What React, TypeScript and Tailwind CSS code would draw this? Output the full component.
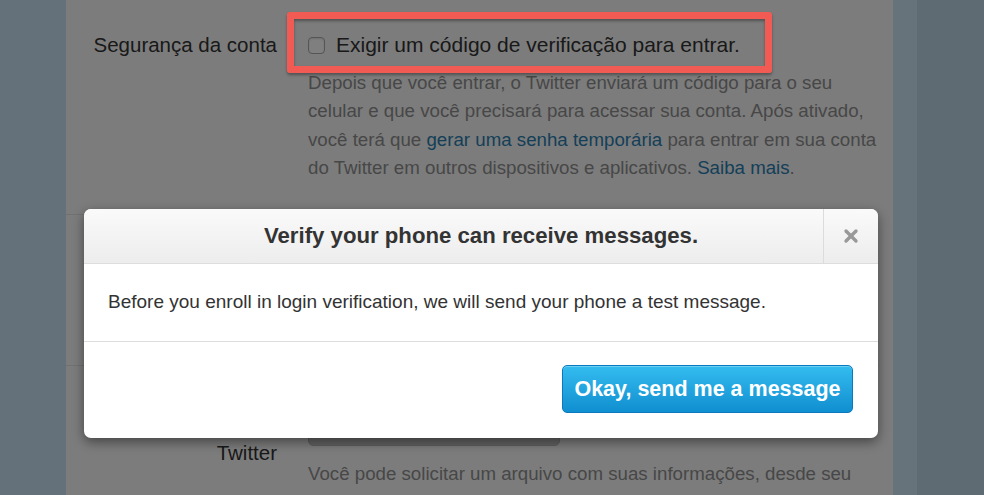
import { X } from "lucide-react";

const font = { fontFamily: '"Liberation Sans", Arial, Helvetica, sans-serif' };

function Row({
  label,
  children,
  className = "",
  labelClass = "",
}: {
  label: React.ReactNode;
  children: React.ReactNode;
  className?: string;
  labelClass?: string;
}) {
  return (
    <div className={`grid grid-cols-[211px_1fr] gap-x-[31px] border-b border-[#e2e2e2] ${className}`}>
      <div className={`text-right text-[20.5px] leading-[28px] text-[#333] ${labelClass}`}>{label}</div>
      <div>{children}</div>
    </div>
  );
}

export default function App() {
  return (
    <div className="relative flex h-[495px] w-[984px] overflow-hidden bg-[#c8e2f4]" style={font}>
      <div className="w-[66px] shrink-0" />

      <main className="w-[827px] shrink-0 bg-[#f9f9f9] pr-[14px]">
        <Row label="Segurança da conta" className="pt-[31px] pb-[31px]">
          <label className="flex h-[28px] items-center gap-[11px]">
            <span className="h-[17px] w-[17px] shrink-0 rounded-[4px] border border-[#aaa] bg-white shadow-[inset_0_1px_2px_rgba(0,0,0,0.12)]" />
            <span className="whitespace-nowrap text-[21px] text-[#333]">Exigir um código de verificação para entrar.</span>
          </label>
          <p className="mt-[10px] whitespace-nowrap text-[18.7px] leading-[28.4px] text-[#8f8f8f]">
            Depois que você entrar, o Twitter enviará um código para o seu
            <br />
            celular e que você precisará para acessar sua conta. Após ativado,
            <br />
            você terá que <a className="text-[#2a7fb0]">gerar uma senha temporária</a> para entrar em sua conta
            <br />
            do Twitter em outros dispositivos e aplicativos. <a className="text-[#2a7fb0]">Saiba mais</a>.
          </p>
        </Row>

        <Row label="Privacidade" className="h-[151px] pt-[30px]">
          <label className="flex h-[28px] items-center gap-[11px]">
            <span className="h-[17px] w-[17px] shrink-0 rounded-[4px] border border-[#aaa] bg-white" />
            <span className="whitespace-nowrap text-[21px] text-[#333]">Proteger meus Tweets</span>
          </label>
          <p className="mt-[10px] whitespace-nowrap text-[18.7px] leading-[28.4px] text-[#8f8f8f]">
            Somente aqueles que você aprovar receberão seus Tweets.
          </p>
        </Row>

        <Row
          label={
            <>
              Seu arquivo do
              <br />
              Twitter
            </>
          }
          labelClass="mt-[13px]"
          className="border-b-0 pt-[32px]"
        >
          <div className="h-[48px] w-[252px] rounded-[5px] border border-[#bbb] bg-gradient-to-b from-[#f4f4f4] to-[#c4c4c4]" />
          <p className="mt-[14px] whitespace-nowrap text-[18.7px] leading-[28.4px] text-[#8f8f8f]">
            Você pode solicitar um arquivo com suas informações, desde seu
            <br />
            primeiro Tweet. Um link será enviado por e-mail quando estiver pronto.
          </p>
        </Row>
      </main>

      <div className="w-[24px] shrink-0 bg-[#cde6f6]" />
      <div className="flex-1 bg-[#bdd7e7]" />

      {/* dim overlay */}
      <div className="absolute inset-0 bg-black/50" />

      {/* annotation */}
      <div className="absolute left-[287px] top-[12px] h-[61px] w-[485px] rounded-[3px] border-[7px] border-[#f25b53] shadow-[0_2px_3px_rgba(0,0,0,0.35),inset_0_2px_3px_rgba(0,0,0,0.35)]" />

      {/* modal */}
      <div className="absolute left-[84px] top-[209px] flex h-[229px] w-[794px] flex-col overflow-hidden rounded-[7px] bg-white shadow-[0_4px_12px_rgba(0,0,0,0.45)]">
        <div className="flex h-[55px] shrink-0 border-b border-[#ddd] bg-gradient-to-b from-[#fafafa] to-[#ededed]">
          <h2 className="flex flex-1 items-center justify-center pl-[55px] text-[22.2px] font-bold text-[#333]">
            Verify your phone can receive messages.
          </h2>
          <button className="flex w-[55px] items-center justify-center border-l border-[#dcdcdc] text-[#999]">
            <X className="h-[20px] w-[20px]" strokeWidth={4} />
          </button>
        </div>
        <div className="flex h-[78px] shrink-0 items-center border-b border-[#ddd] px-[24px]">
          <p className="whitespace-nowrap text-[19px] text-[#333]">
            Before you enroll in login verification, we will send your phone a test message.
          </p>
        </div>
        <div className="flex flex-1 items-start justify-end pr-[25px] pt-[23px]">
          <button className="h-[48px] w-[291px] rounded-[5px] border border-[#0b79bd] bg-gradient-to-b from-[#33bcef] to-[#0f8fd0] text-[21.5px] font-bold text-white shadow-[inset_0_1px_0_rgba(255,255,255,0.3)]">
            Okay, send me a message
          </button>
        </div>
      </div>
    </div>
  );
}
